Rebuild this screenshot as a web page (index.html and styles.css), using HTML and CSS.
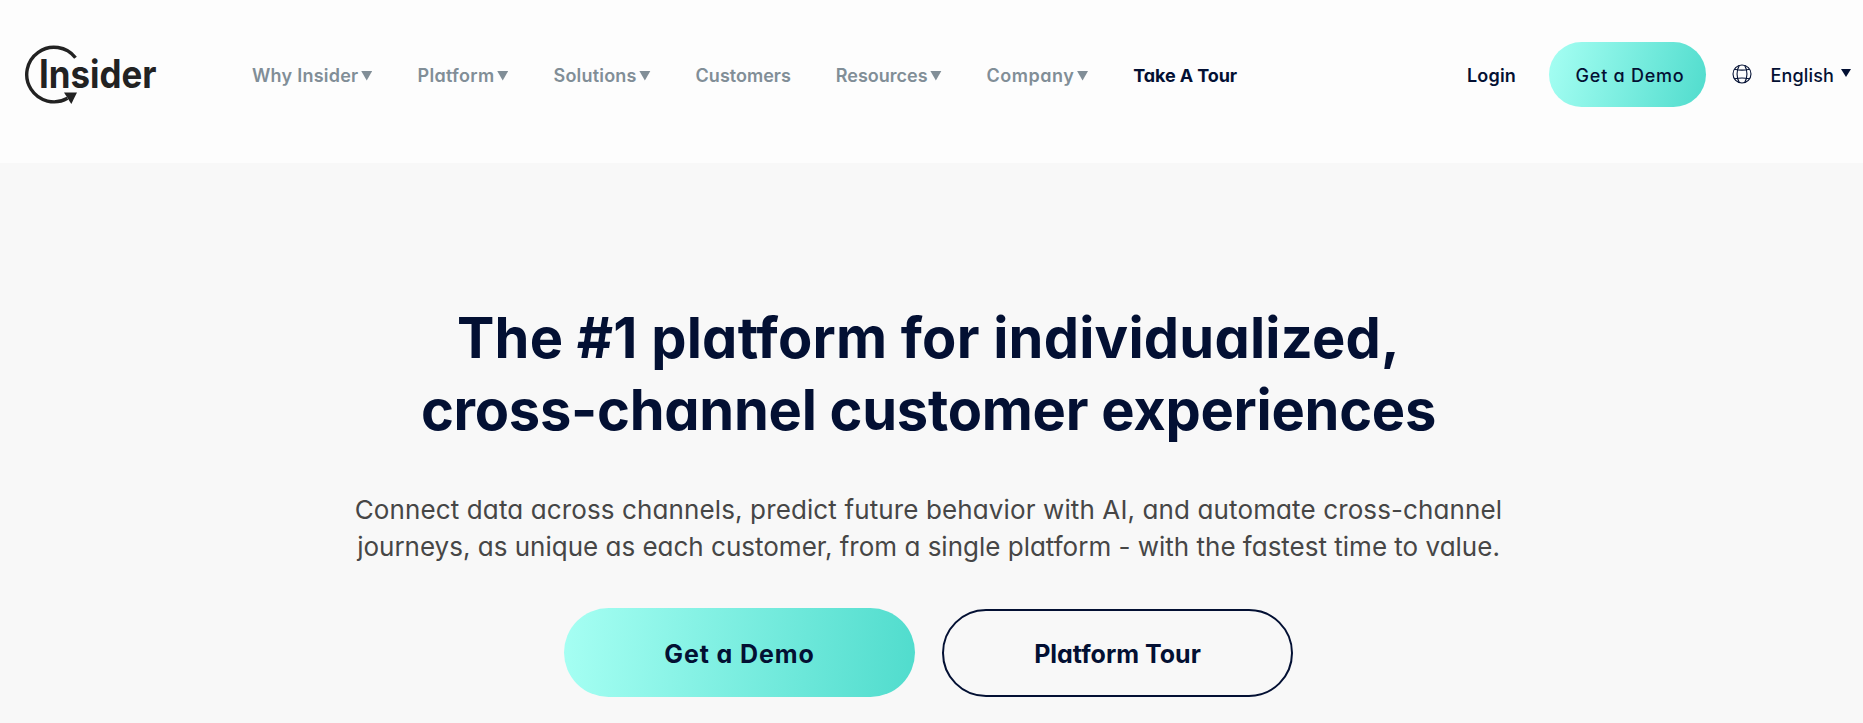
FILE: index.html
```html
<!DOCTYPE html>
<html lang="en">
<head>
    <meta charset="UTF-8">
    <meta name="viewport" content="width=device-width, initial-scale=1.0">
    <title>Insider</title>
    <link rel="stylesheet" href="styles.css">
</head>
<body>
    <header class="header">
        <a class="logo" href="#">
            <svg width="150" height="62" viewBox="0 0 150 62" role="img" aria-label="Insider">
                <path d="M51.5 13.7 A27.3 27.3 0 1 0 43.5 54.3" fill="none" stroke="#222" stroke-width="3.4"/>
                <path d="M40 48.5 H53 L47.3 60 Z" fill="#222"/>
                <text class="logo-text" x="15" y="44" textLength="117.5" lengthAdjust="spacingAndGlyphs">Insider</text>
            </svg>
        </a>

        <nav class="nav">
            <a class="nav-link why" href="#">Why Insider<span class="caret"></span></a>
            <a class="nav-link platform" href="#">Platform<span class="caret"></span></a>
            <a class="nav-link solutions" href="#">Solutions<span class="caret"></span></a>
            <a class="nav-link" href="#">Customers</a>
            <a class="nav-link" href="#">Resources<span class="caret"></span></a>
            <a class="nav-link company" href="#">Company<span class="caret"></span></a>
            <a class="nav-link tour" href="#">Take A Tour</a>
        </nav>

        <div class="actions">
            <a class="login" href="#">Login</a>
            <a class="btn-demo" href="#">Get a Demo</a>
            <div class="language">
                <svg class="globe" width="20" height="20" viewBox="0 0 20 20" fill="none" stroke="#031033" stroke-width="1.1">
                    <circle cx="10" cy="10" r="9"/>
                    <path d="M7.3 1.4 C4.3 6.5 4.3 13.5 7.3 18.6 M12.7 1.4 C15.7 6.5 15.7 13.5 12.7 18.6"/>
                    <path d="M2.6 5.3 Q10 7 17.4 5.3 M2.6 14.7 Q10 13.4 17.4 14.7"/>
                </svg>
                <span>English</span>
                <span class="caret small"></span>
            </div>
        </div>
    </header>

    <main class="hero">
        <h1>
            <span class="title-top">The #1 platform for individualized,</span>
            <span class="title-bottom">cross-channel customer experiences</span>
        </h1>
        <p>
            Connect data across channels, predict future behavior with AI, and automate cross-channel<br>
            <span class="lead-bottom">journeys, as unique as each customer, from a single platform - with the fastest time to value.</span>
        </p>
        <div class="buttons">
            <a class="btn primary" href="#">Get a Demo</a>
            <a class="btn outline" href="#">Platform Tour</a>
        </div>
    </main>
</body>
</html>
```
FILE: styles.css
```css
* {
    margin: 0;
    padding: 0;
    box-sizing: border-box;
}

body {
    font-family: Inter, sans-serif;
    font-feature-settings: "cv11";
    background: #f8f8f8;
    color: #031033;
    height: 723px;
    overflow: hidden;
}

a {
    color: inherit;
    text-decoration: none;
}

.header {
    display: flex;
    align-items: center;
    height: 163px;
    padding: 0 12px 14px 24px;
    background: #fdfdfd;
}

.logo {
    width: 228px;
    height: 62px;
}

.logo svg {
    display: block;
}

.logo-text {
    font-size: 39px;
    font-weight: 700;
    fill: #222;
}

.nav {
    display: flex;
    gap: 45px;
    flex: 1;
    font-size: 18px;
    line-height: 24px;
    font-weight: 600;
    color: #818e97;
    padding-top: 2px;
}

.nav-link {
    display: flex;
    align-items: center;
    white-space: nowrap;
}

.why {
    letter-spacing: 0.24px;
}

.platform {
    letter-spacing: 0.32px;
}

.solutions {
    letter-spacing: 0.2px;
}

.company {
    letter-spacing: 0.5px;
}

.tour {
    color: #031033;
    font-weight: 700;
    letter-spacing: -0.1px;
}

.caret {
    width: 11.5px;
    height: 10px;
    margin-left: 2.5px;
    background: currentColor;
    clip-path: polygon(0 0, 100% 0, 50% 100%);
}

.actions {
    display: flex;
    align-items: center;
    font-size: 18px;
    font-weight: 500;
}

.login {
    font-weight: 600;
    letter-spacing: 0.2px;
    padding-top: 2px;
    margin-right: 33px;
}

.btn-demo {
    display: flex;
    align-items: center;
    justify-content: center;
    width: 157px;
    height: 65px;
    padding: 2px 0 0 5px;
    border-radius: 33px;
    background: linear-gradient(105deg, #a6fff3, #50dccd);
    letter-spacing: 0.75px;
}

.language {
    display: flex;
    align-items: center;
    margin-left: 26px;
    padding-top: 2px;
    letter-spacing: 0.15px;
}

.globe {
    margin: 0 18.5px 4px 0;
}

.caret.small {
    width: 10px;
    height: 8px;
    margin: 0 0 5px 7px;
}

.hero {
    display: flex;
    flex-direction: column;
    align-items: center;
    padding: 139px 6px 0 0;
    text-align: center;
}

h1 {
    font-size: 56px;
    line-height: 72px;
    font-weight: 700;
}

h1 span {
    display: block;
}

.title-top {
    letter-spacing: 0.23px;
}

.title-bottom {
    letter-spacing: -0.26px;
}

p {
    margin-top: 45px;
    font-size: 26px;
    line-height: 37px;
    letter-spacing: 0.12px;
    color: #464646;
    white-space: nowrap;
}

.lead-bottom {
    letter-spacing: 0;
}

.buttons {
    display: flex;
    gap: 27px;
    margin-top: 43px;
}

.btn {
    display: flex;
    align-items: center;
    justify-content: center;
    width: 351px;
    height: 89px;
    padding-top: 2px;
    border-radius: 45px;
    font-size: 25px;
    font-weight: 700;
}

.primary {
    background: linear-gradient(95deg, #a6fff3, #50dccd);
    letter-spacing: 0.9px;
}

.outline {
    border: 2px solid #031033;
    height: 88px;
    margin-top: 1px;
}
```
